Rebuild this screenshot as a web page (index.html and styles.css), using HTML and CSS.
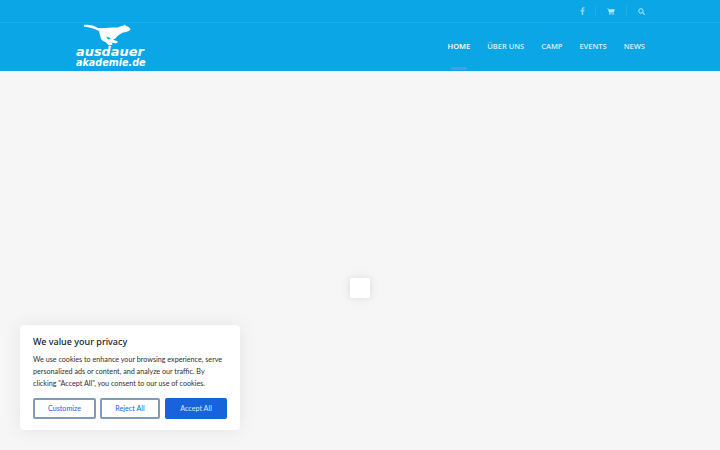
FILE: index.html
```html
<!DOCTYPE html>
<html lang="de">
<head>
<meta charset="utf-8">
<title>ausdauer akademie</title>
<link rel="stylesheet" href="styles.css">
</head>
<body>
<header class="header">
  <div class="topbar">
    <div class="topbar-inner">
      <a class="top-icon top-icon-f"><svg width="5" height="8" viewBox="0 0 6 10"><path d="M2 10V5.500H.6V3.800H2V2.600C2 1 2.900.2 4.300.2H5.600V2H4.700C4.100 2 3.900 2.200 3.900 2.800V3.800H5.500L5.300 5.500H3.900V10Z" fill="#8fd6f4"/></svg></a>
      <a class="top-icon top-icon-cart"><svg width="8" height="7" viewBox="0 0 10 9"><path d="M0 .5H1.800L2.200 1.600H9.800L8.800 5.400H3.200L3.400 6.200H8.600V7H2.700L1.200 1.300H0Z" fill="#b5e6fa"/><circle cx="3.600" cy="8" r=".8" fill="#b5e6fa"/><circle cx="7.800" cy="8" r=".8" fill="#b5e6fa"/></svg></a>
      <a class="top-icon top-icon-last"><svg width="7" height="7" viewBox="0 0 10 10"><circle cx="4.200" cy="4.200" r="3.200" fill="none" stroke="#b5e6fa" stroke-width="1.400"/><path d="M6.600 6.600L9.500 9.500" stroke="#b5e6fa" stroke-width="1.600"/></svg></a>
    </div>
  </div>
  <div class="mainbar">
    <a class="logo">
      <svg class="logo-mark" width="47" height="22" viewBox="0 0 47 22"><path d="M0 1C4 .3 9 .8 14 4C19 4.500 25 3.500 34 3.500C36 2.500 38 1.500 40 1.500L41 .5L42 1.800C44 2.500 46 4 46.500 5.500L45 7C43.500 7.500 42 8 39 8.500C37 9.500 35 11 33 12.500C32 14 31 15 29 15.500C31 16.500 33 17 34 18L32 19.500C30.500 19.500 28.500 19 27 18.300C28 19 28.500 20 28.500 20.800L25 21.500C24 20.500 23 19.500 22 18.500L20.500 17.500C18.500 17 17 15.500 16.500 13C16 11 15.500 9 15 7C11 5 6 3 0 2.500Z" fill="#fff"/><path d="M22 12.500C24 13 26 13.500 27 15L24 15.500Z" fill="#0aa6e6"/></svg>
      <span class="logo-line logo-line-a">ausdauer</span>
      <span class="logo-line logo-line-b">akademie.de</span>
    </a>
    <nav class="nav">
      <a class="nav-item nav-item-active">HOME</a>
      <a class="nav-item">ÜBER UNS</a>
      <a class="nav-item">CAMP</a>
      <a class="nav-item">EVENTS</a>
      <a class="nav-item">NEWS</a>
    </nav>
  </div>
</header>
<main class="content">
  <div class="loader"></div>
  <section class="cookie">
    <h2 class="cookie-title">We value your privacy</h2>
    <p class="cookie-text">We use cookies to enhance your browsing experience, serve personalized ads or content, and analyze our traffic. By clicking "Accept All", you consent to our use of cookies.</p>
    <div class="cookie-actions">
      <button class="btn btn-customize">Customize</button>
      <button class="btn btn-reject">Reject All</button>
      <button class="btn btn-accept">Accept All</button>
    </div>
  </section>
</main>
</body>
</html>
```
FILE: styles.css
```css
* { box-sizing: border-box; }
html, body { margin: 0; height: 100%; overflow: hidden; }
body { background: #f6f6f6; font-family: "Noto Sans", "Open Sans", sans-serif; display: flex; flex-direction: column; height: 450px; }
.header { background: #0aa6e6; height: 71px; flex: none; }
.topbar { height: 23px; border-bottom: 1px solid #1fade8; }
.topbar-inner { padding-right: 65px; height: 100%; display: flex; justify-content: flex-end; align-items: center; }
.top-icon { height: 12px; display: flex; align-items: center; justify-content: center; border-right: 1px solid #1fade8; }
.top-icon-f { width: 28px; padding-left: 1px; }
.top-icon-cart { width: 31px; padding-right: 1px; }
.top-icon-last { border-right: 0; width: 28px; }
.mainbar { height: 48px; padding-left: 76px; padding-right: 75px; display: flex; justify-content: space-between; }
.logo { display: block; width: 72px; color: #fff; font-family: "DejaVu Sans", sans-serif; font-style: italic; font-weight: 700; padding-top: 1px; }
.logo-mark { display: block; margin-left: 8px; }
.logo-line { display: block; white-space: nowrap; }
.logo-line-a { font-size: 12.900px; line-height: 11px; }
.logo-line-b { font-size: 9.600px; line-height: 11px; }
.nav { display: flex; gap: 17px; align-items: flex-start; padding-top: 17px; height: 48px; }
.nav-item { position: relative; font-family: "Open Sans", sans-serif; font-size: 7.500px; font-weight: 600; line-height: 12px; color: #d8f2fd; white-space: nowrap; }
.nav-item-active { color: #fff; }
.nav-item-active::after { content: ""; position: absolute; left: 3px; right: 3px; top: 27px; height: 3px; background: #4a9bea; }
.content { flex: 1; position: relative; }
.loader { position: absolute; left: 350px; top: 207px; width: 20px; height: 20px; background: #fff; border-radius: 2px; box-shadow: 0 0 10px rgba(0,0,0,.12); }
.cookie { position: absolute; left: 20px; top: 254px; width: 220px; height: 105px; background: #fff; border-radius: 4px; box-shadow: 0 0 18px rgba(0,0,0,.08); padding: 10px 13px 0; }
.cookie-title { margin: 0; font-size: 9px; line-height: 13px; font-weight: 500; color: #212121; }
.cookie-text { margin: 6px 0 0; font-family: "Lato", sans-serif; font-size: 7.200px; line-height: 12px; color: #303030; }
.cookie-actions { display: flex; gap: 4px; margin-top: 8px; }
.btn { height: 21px; font: 400 7.200px/1 "Lato", sans-serif; border-radius: 2px; padding: 0; color: #1863dc; background: #fff; border: 2px solid #7d9bbd; }
.btn-customize { width: 63px; }
.btn-reject { width: 60px; }
.btn-accept { width: 62px; margin-left: 1px; background: #1863dc; border-color: #1863dc; color: #dbe7fa; }
```
